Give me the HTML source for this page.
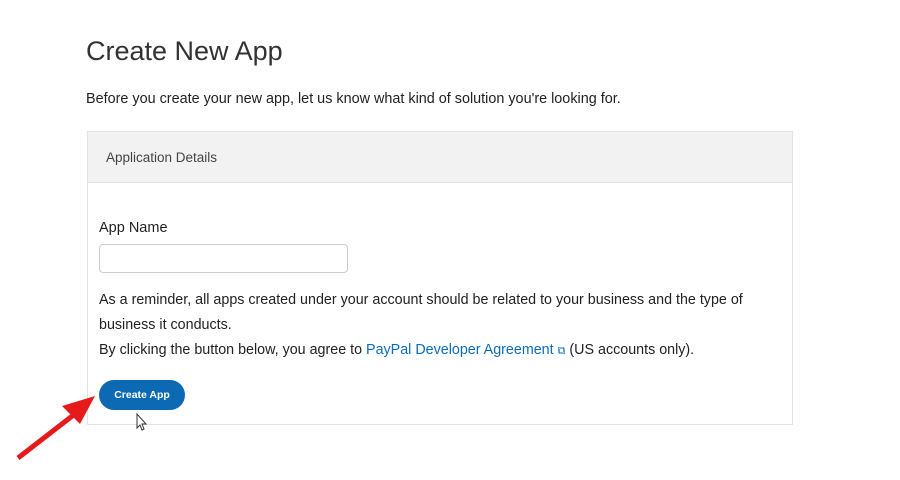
<!DOCTYPE html>
<html><head><style>
body{margin:0;width:900px;height:480px;background:#fff;font-family:"Liberation Sans",sans-serif;color:#2c2e2f;position:relative;overflow:hidden}
.a{position:absolute}
</style></head><body>
<div class="a" style="left:86px;top:36px;font-size:27px;color:#333;font-weight:300">Create New App</div>
<div class="a" style="left:86px;top:91px;font-size:14.4px;color:#222">Before you create your new app, let us know what kind of solution you're looking for.</div>
<div class="a" style="left:87px;top:131px;width:704px;height:292px;border:1px solid #e2e2e2"></div>
<div class="a" style="left:88px;top:132px;width:704px;height:50px;background:#f2f2f2;border-bottom:1px solid #e0e0e0"></div>
<div class="a" style="left:106px;top:150px;font-size:13.5px;color:#444">Application Details</div>
<div class="a" style="left:99px;top:220px;font-size:14.5px;color:#222">App Name</div>
<div class="a" style="left:99px;top:244px;width:247px;height:27px;border:1px solid #ccc;border-radius:4px"></div>
<div class="a" style="left:99px;top:288px;font-size:14.3px;color:#222;line-height:25px">As a reminder, all apps created under your account should be related to your business and the type of<br>business it conducts.<br>By clicking the button below, you agree to <span style="color:#0a6db7">PayPal Developer Agreement <span style="font-size:11px">&#x29c9;</span></span> (US accounts only).</div>
<div class="a" style="left:99px;top:380px;width:86px;height:30px;border-radius:15px;background:#0b6ab3;color:#fff;font-size:10.5px;font-weight:bold;text-align:center;line-height:30px">Create App</div>
<svg class="a" style="left:0;top:380px" width="160" height="100"><line x1="18" y1="78" x2="80" y2="30" stroke="#e51b1b" stroke-width="5"/><polygon points="95,16 62,26 80,44" fill="#e51b1b"/><path d="M137 414l0 14 3-3 2 5 2-1-2-5 4 0z" transform="translate(0,-380)" fill="#fff" stroke="#333" stroke-width="1"/></svg>
</body></html>
